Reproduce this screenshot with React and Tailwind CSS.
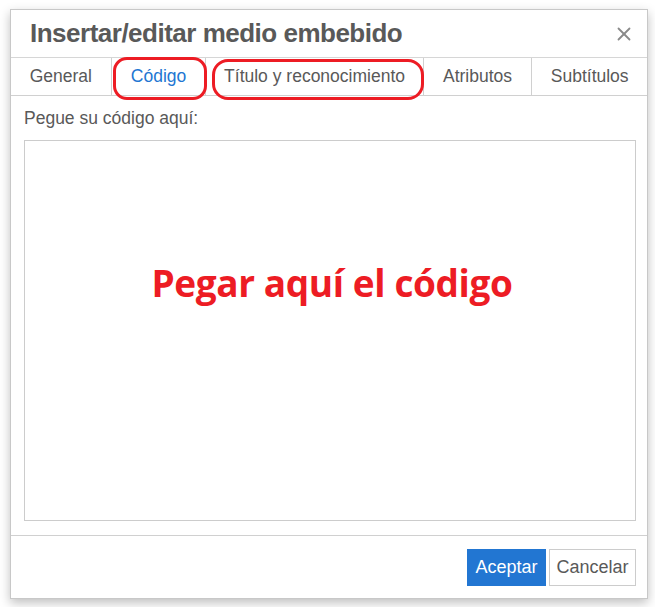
import React from "react";
import { X } from "lucide-react";

const tabs = ["General", "Código", "Título y reconocimiento", "Atributos", "Subtítulos"];
const tabWidths = ["w-[101px]", "w-[95px]", "w-[218px]", "w-[109px]", "w-[115px]"];

export default function App() {
  return (
    <div
      className="w-[655px] h-[607px] bg-white pt-[9px] pl-[10px]"
      style={{ fontFamily: '"Liberation Sans", Arial, sans-serif' }}
    >
      <div className="relative w-[638px] h-[590px] bg-white border border-[#c8c8c8] shadow-[0_4px_10px_rgba(0,0,0,0.25)] flex flex-col">
        {/* Header */}
        <div className="h-[48px] flex items-center justify-between pl-[19px] pr-[12px] border-b border-[#d6d6d6]">
          <h1 className="text-[26px] font-bold text-[#595959] tracking-[-0.5px]">Insertar/editar medio embebido</h1>
          <X className="size-[22px] text-[#8a8a8a]" strokeWidth={2} />
        </div>

        {/* Tabs */}
        <div className="flex h-[38px] border-b border-[#d0d0d0]">
          {tabs.map((t, i) => (
            <div
              key={t}
              className={`${tabWidths[i]} flex items-center justify-center text-[17.5px] ${
                i < tabs.length - 1 ? "border-r border-[#d0d0d0]" : ""
              } ${i === 1 ? "text-[#2276d2]" : "text-[#595959]"}`}
            >
              {t}
            </div>
          ))}
        </div>

        {/* Body */}
        <div className="flex-1 flex flex-col pl-[13px] pr-[11px] pt-[13px]">
          <label className="text-[17.5px] text-[#595959] leading-[19px]">Pegue su código aquí:</label>
          <div className="mt-[12px] h-[381px] border border-[#cccccc] flex items-start justify-center">
            <span
              className="mt-[114px] ml-[4px] text-[37px] font-bold text-[#ed1c24] tracking-[-0.4px]"
              style={{ fontFamily: '"Open Sans", sans-serif' }}
            >
              Pegar aquí el código
            </span>
          </div>
        </div>

        {/* Footer */}
        <div className="h-[63px] border-t border-[#d0d0d0] flex justify-end items-start gap-[3px] pt-[13px] pr-[11px]">
          <button className="h-[37px] w-[79px] bg-[#2276d2] text-white text-[18px]">Aceptar</button>
          <button className="h-[37px] w-[87px] bg-white border border-[#cccccc] text-[#595959] text-[18px]">
            Cancelar
          </button>
        </div>

        {/* Red highlight marks over the tabs */}
        <div className="absolute left-[102px] top-[47px] w-[94px] h-[43px] border-[3px] border-[#ed1c24] rounded-[14px]" />
        <div className="absolute left-[201px] top-[49px] w-[212px] h-[41px] border-[3px] border-[#ed1c24] rounded-[16px]" />
      </div>
    </div>
  );
}
